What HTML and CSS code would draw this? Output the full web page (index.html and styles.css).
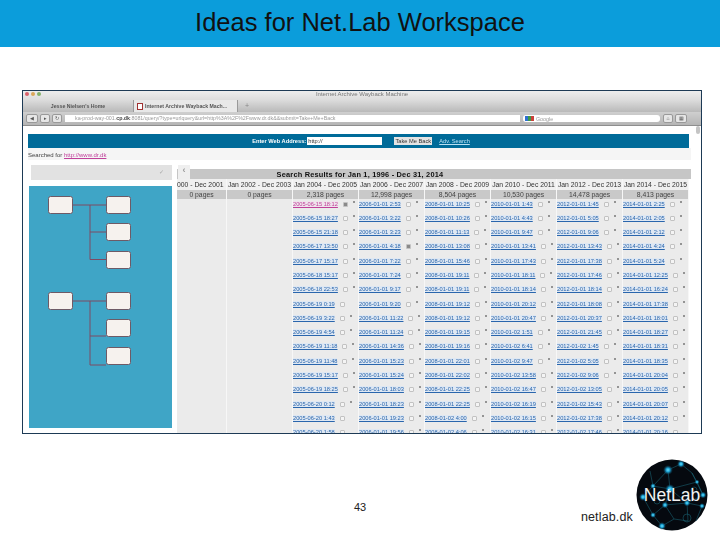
FILE: index.html
```html
<!DOCTYPE html>
<html lang="en">
<head>
  <meta charset="UTF-8">
  <title>Ideas for Net.Lab Workspace</title>
  <link rel="stylesheet" href="styles.css">
</head>
<body>
  <div class="slide">
    <header class="slide-title">Ideas for Net.Lab Workspace</header>

    <main class="slide-body">
      <div class="shot">
        <div class="titlebar">
          <div class="lights"><i class="light red"></i><i class="light amber"></i><i class="light green"></i></div>
          <div class="window-name">Internet Archive Wayback Machine</div>
        </div>
        <div class="tabs">
          <div class="tab">Jesse Nielsen's Home</div>
          <div class="tab active"><i class="favicon"></i>Internet Archive Wayback Mach...</div>
          <div class="tab-add">+</div>
        </div>
        <div class="toolbar">
          <div class="nav-btns"><span class="nav-btn wide">&#9664;</span><span class="nav-btn">&#9656;</span><span class="nav-btn">&#8635;</span></div>
          <div class="url-bar">ka-prod-way-001.<b>cp.dk</b>:8081/query/?type=urlquery&amp;url=http%3A%2F%2Fwww.dr.dk&amp;&amp;submit=Take+Me+Back</div>
          <div class="search-bar"><i class="g-icon"></i>Google</div>
          <div class="nav-btns"><span class="nav-btn">&#8962;</span><span class="nav-btn wide">&#9638;</span></div>
        </div>

        <div class="page">
          <div class="banner">
            <span class="banner-label">Enter Web Address:</span>
            <span class="banner-input">http://</span>
            <span class="banner-btn">Take Me Back</span>
            <span class="banner-link">Adv. Search</span>
          </div>
          <div class="searched">Searched for <a href="#">http://www.dr.dk</a></div>

          <div class="results">
            <aside class="side">
              <div class="side-top"><span class="side-pin">&#10003;</span></div>
              <div class="side-panel">
                <svg class="tree" width="143" height="242" viewBox="0 0 143 242">
                  <g class="tree-lines">
                    <path d="M44 19H77M61 19V73.500H77M61 46H77"/>
                    <path d="M44 115H77M61 115V179H77M61 150H77"/>
                  </g>
                  <g class="tree-nodes">
                    <rect x="19.500" y="10.500" width="24" height="17" rx="2"/>
                    <rect x="77.500" y="10.500" width="24" height="17" rx="2"/>
                    <rect x="77.500" y="37.500" width="24" height="17" rx="2"/>
                    <rect x="77.500" y="65.500" width="24" height="17" rx="2"/>
                    <rect x="19.500" y="106.500" width="24" height="17" rx="2"/>
                    <rect x="77.500" y="106.500" width="24" height="17" rx="2"/>
                    <rect x="77.500" y="133.500" width="24" height="17" rx="2"/>
                    <rect x="77.500" y="161.500" width="24" height="17" rx="2"/>
                  </g>
                </svg>
              </div>
            </aside>

            <section class="table">
              <div class="table-title"><span class="collapse">&#8249;</span>Search Results for Jan 1, 1996 - Dec 31, 2014</div>
              <div class="cols">
                <div class="col first">
                  <div class="col-head">000 - Dec 2001</div>
                  <div class="col-count">0 pages</div>
                </div>
                <div class="col">
                  <div class="col-head">Jan 2002 - Dec 2003</div>
                  <div class="col-count">0 pages</div>
                </div>
                <div class="col">
                  <div class="col-head">Jan 2004 - Dec 2005</div>
                  <div class="col-count">2,318 pages</div>
                  <div class="row"><a class="seen" href="#">2005-06-15 18:12</a><i class="box on"></i><i class="star"></i></div>
                  <div class="row"><a href="#">2005-06-15 18:27</a><i class="box"></i><i class="star"></i></div>
                  <div class="row"><a href="#">2005-06-15 21:18</a><i class="box"></i><i class="star"></i></div>
                  <div class="row"><a href="#">2005-06-17 13:50</a><i class="box"></i><i class="star"></i></div>
                  <div class="row"><a href="#">2005-06-17 15:17</a><i class="box"></i><i class="star"></i></div>
                  <div class="row"><a href="#">2005-06-18 15:17</a><i class="box"></i><i class="star"></i></div>
                  <div class="row"><a href="#">2005-06-18 22:53</a><i class="box"></i><i class="star"></i></div>
                  <div class="row"><a href="#">2005-06-19 0:19</a><i class="box"></i></div>
                  <div class="row"><a href="#">2005-06-19 3:22</a><i class="box"></i><i class="star"></i></div>
                  <div class="row"><a href="#">2005-06-19 4:54</a><i class="box"></i><i class="star"></i></div>
                  <div class="row"><a href="#">2005-06-19 11:18</a><i class="box"></i><i class="star"></i></div>
                  <div class="row"><a href="#">2005-06-19 11:48</a><i class="box"></i><i class="star"></i></div>
                  <div class="row"><a href="#">2005-06-19 15:17</a><i class="box"></i><i class="star"></i></div>
                  <div class="row"><a href="#">2005-06-19 18:25</a><i class="box"></i><i class="star"></i></div>
                  <div class="row"><a href="#">2005-06-20 0:12</a><i class="box"></i><i class="star"></i></div>
                  <div class="row"><a href="#">2005-06-20 1:43</a><i class="box"></i></div>
                  <div class="row"><a href="#">2005-06-20 1:58</a><i class="box"></i></div>
                </div>
                <div class="col">
                  <div class="col-head">Jan 2006 - Dec 2007</div>
                  <div class="col-count">12,998 pages</div>
                  <div class="row"><a href="#">2006-01-01 2:53</a><i class="box"></i><i class="star"></i></div>
                  <div class="row"><a href="#">2006-01-01 3:22</a><i class="box"></i><i class="star"></i></div>
                  <div class="row"><a href="#">2006-01-01 3:23</a><i class="box"></i><i class="star"></i></div>
                  <div class="row"><a href="#">2006-01-01 4:18</a><i class="box on"></i><i class="star"></i></div>
                  <div class="row"><a href="#">2006-01-01 7:22</a><i class="box"></i><i class="star"></i></div>
                  <div class="row"><a href="#">2006-01-01 7:24</a><i class="box"></i><i class="star"></i></div>
                  <div class="row"><a href="#">2006-01-01 9:17</a><i class="box"></i><i class="star"></i></div>
                  <div class="row"><a href="#">2006-01-01 9:20</a><i class="box"></i><i class="star"></i></div>
                  <div class="row"><a href="#">2006-01-01 11:22</a><i class="box"></i><i class="star"></i></div>
                  <div class="row"><a href="#">2006-01-01 11:24</a><i class="box"></i><i class="star"></i></div>
                  <div class="row"><a href="#">2006-01-01 14:36</a><i class="box"></i><i class="star"></i></div>
                  <div class="row"><a href="#">2006-01-01 15:23</a><i class="box"></i><i class="star"></i></div>
                  <div class="row"><a href="#">2006-01-01 15:24</a><i class="box"></i><i class="star"></i></div>
                  <div class="row"><a href="#">2006-01-01 18:03</a><i class="box"></i><i class="star"></i></div>
                  <div class="row"><a href="#">2006-01-01 18:23</a><i class="box"></i><i class="star"></i></div>
                  <div class="row"><a href="#">2006-01-01 19:23</a><i class="box"></i><i class="star"></i></div>
                  <div class="row"><a href="#">2006-01-01 19:56</a><i class="box"></i><i class="star"></i></div>
                </div>
                <div class="col">
                  <div class="col-head">Jan 2008 - Dec 2009</div>
                  <div class="col-count">8,504 pages</div>
                  <div class="row"><a href="#">2008-01-01 10:25</a><i class="box"></i><i class="star"></i></div>
                  <div class="row"><a href="#">2008-01-01 10:26</a><i class="box"></i><i class="star"></i></div>
                  <div class="row"><a href="#">2008-01-01 11:13</a><i class="box"></i><i class="star"></i></div>
                  <div class="row"><a href="#">2008-01-01 13:08</a><i class="box"></i><i class="star"></i></div>
                  <div class="row"><a href="#">2008-01-01 15:46</a><i class="box"></i><i class="star"></i></div>
                  <div class="row"><a href="#">2008-01-01 19:11</a><i class="box"></i><i class="star"></i></div>
                  <div class="row"><a href="#">2008-01-01 19:11</a><i class="box"></i><i class="star"></i></div>
                  <div class="row"><a href="#">2008-01-01 19:12</a><i class="box"></i><i class="star"></i></div>
                  <div class="row"><a href="#">2008-01-01 19:12</a><i class="box"></i><i class="star"></i></div>
                  <div class="row"><a href="#">2008-01-01 19:15</a><i class="box"></i><i class="star"></i></div>
                  <div class="row"><a href="#">2008-01-01 19:16</a><i class="box"></i><i class="star"></i></div>
                  <div class="row"><a href="#">2008-01-01 22:01</a><i class="box"></i><i class="star"></i></div>
                  <div class="row"><a href="#">2008-01-01 22:02</a><i class="box"></i><i class="star"></i></div>
                  <div class="row"><a href="#">2008-01-01 22:25</a><i class="box"></i><i class="star"></i></div>
                  <div class="row"><a href="#">2008-01-01 22:25</a><i class="box"></i><i class="star"></i></div>
                  <div class="row"><a href="#">2008-01-02 4:00</a><i class="box"></i><i class="star"></i></div>
                  <div class="row"><a href="#">2008-01-02 4:06</a><i class="box"></i><i class="star"></i></div>
                </div>
                <div class="col">
                  <div class="col-head">Jan 2010 - Dec 2011</div>
                  <div class="col-count">10,530 pages</div>
                  <div class="row"><a href="#">2010-01-01 1:43</a><i class="box"></i><i class="star"></i></div>
                  <div class="row"><a href="#">2010-01-01 4:43</a><i class="box"></i><i class="star"></i></div>
                  <div class="row"><a href="#">2010-01-01 9:47</a><i class="box"></i><i class="star"></i></div>
                  <div class="row"><a href="#">2010-01-01 13:41</a><i class="box"></i><i class="star"></i></div>
                  <div class="row"><a href="#">2010-01-01 17:43</a><i class="box"></i><i class="star"></i></div>
                  <div class="row"><a href="#">2010-01-01 18:11</a><i class="box"></i><i class="star"></i></div>
                  <div class="row"><a href="#">2010-01-01 18:14</a><i class="box"></i><i class="star"></i></div>
                  <div class="row"><a href="#">2010-01-01 20:12</a><i class="box"></i><i class="star"></i></div>
                  <div class="row"><a href="#">2010-01-01 20:47</a><i class="box"></i><i class="star"></i></div>
                  <div class="row"><a href="#">2010-01-02 1:51</a><i class="box"></i><i class="star"></i></div>
                  <div class="row"><a href="#">2010-01-02 6:41</a><i class="box"></i><i class="star"></i></div>
                  <div class="row"><a href="#">2010-01-02 9:47</a><i class="box"></i><i class="star"></i></div>
                  <div class="row"><a href="#">2010-01-02 13:58</a><i class="box"></i><i class="star"></i></div>
                  <div class="row"><a href="#">2010-01-02 16:47</a><i class="box"></i><i class="star"></i></div>
                  <div class="row"><a href="#">2010-01-02 16:19</a><i class="box"></i><i class="star"></i></div>
                  <div class="row"><a href="#">2010-01-02 16:15</a><i class="box"></i><i class="star"></i></div>
                  <div class="row"><a href="#">2010-01-02 16:31</a><i class="box"></i><i class="star"></i></div>
                </div>
                <div class="col">
                  <div class="col-head">Jan 2012 - Dec 2013</div>
                  <div class="col-count">14,478 pages</div>
                  <div class="row"><a href="#">2012-01-01 1:45</a><i class="box"></i><i class="star"></i></div>
                  <div class="row"><a href="#">2012-01-01 5:05</a><i class="box"></i><i class="star"></i></div>
                  <div class="row"><a href="#">2012-01-01 9:06</a><i class="box"></i><i class="star"></i></div>
                  <div class="row"><a href="#">2012-01-01 13:43</a><i class="box"></i><i class="star"></i></div>
                  <div class="row"><a href="#">2012-01-01 17:38</a><i class="box"></i><i class="star"></i></div>
                  <div class="row"><a href="#">2012-01-01 17:46</a><i class="box"></i><i class="star"></i></div>
                  <div class="row"><a href="#">2012-01-01 18:14</a><i class="box"></i><i class="star"></i></div>
                  <div class="row"><a href="#">2012-01-01 18:08</a><i class="box"></i><i class="star"></i></div>
                  <div class="row"><a href="#">2012-01-01 20:37</a><i class="box"></i><i class="star"></i></div>
                  <div class="row"><a href="#">2012-01-01 21:45</a><i class="box"></i><i class="star"></i></div>
                  <div class="row"><a href="#">2012-01-02 1:45</a><i class="box"></i><i class="star"></i></div>
                  <div class="row"><a href="#">2012-01-02 5:05</a><i class="box"></i><i class="star"></i></div>
                  <div class="row"><a href="#">2012-01-02 9:06</a><i class="box"></i><i class="star"></i></div>
                  <div class="row"><a href="#">2012-01-02 13:05</a><i class="box"></i><i class="star"></i></div>
                  <div class="row"><a href="#">2012-01-02 15:43</a><i class="box"></i><i class="star"></i></div>
                  <div class="row"><a href="#">2012-01-02 17:38</a><i class="box"></i><i class="star"></i></div>
                  <div class="row"><a href="#">2012-01-02 17:46</a><i class="box"></i><i class="star"></i></div>
                </div>
                <div class="col">
                  <div class="col-head">Jan 2014 - Dec 2015</div>
                  <div class="col-count">8,413 pages</div>
                  <div class="row"><a href="#">2014-01-01 2:25</a><i class="box"></i><i class="star"></i></div>
                  <div class="row"><a href="#">2014-01-01 2:05</a><i class="box"></i><i class="star"></i></div>
                  <div class="row"><a href="#">2014-01-01 2:12</a><i class="box"></i><i class="star"></i></div>
                  <div class="row"><a href="#">2014-01-01 4:24</a><i class="box"></i><i class="star"></i></div>
                  <div class="row"><a href="#">2014-01-01 5:24</a><i class="box"></i><i class="star"></i></div>
                  <div class="row"><a href="#">2014-01-01 12:25</a><i class="box"></i><i class="star"></i></div>
                  <div class="row"><a href="#">2014-01-01 16:24</a><i class="box"></i><i class="star"></i></div>
                  <div class="row"><a href="#">2014-01-01 17:38</a><i class="box"></i><i class="star"></i></div>
                  <div class="row"><a href="#">2014-01-01 18:01</a><i class="box"></i><i class="star"></i></div>
                  <div class="row"><a href="#">2014-01-01 18:27</a><i class="box"></i><i class="star"></i></div>
                  <div class="row"><a href="#">2014-01-01 18:31</a><i class="box"></i><i class="star"></i></div>
                  <div class="row"><a href="#">2014-01-01 18:35</a><i class="box"></i><i class="star"></i></div>
                  <div class="row"><a href="#">2014-01-01 20:04</a><i class="box"></i><i class="star"></i></div>
                  <div class="row"><a href="#">2014-01-01 20:05</a><i class="box"></i><i class="star"></i></div>
                  <div class="row"><a href="#">2014-01-01 20:07</a><i class="box"></i><i class="star"></i></div>
                  <div class="row"><a href="#">2014-01-01 20:12</a><i class="box"></i><i class="star"></i></div>
                  <div class="row"><a href="#">2014-01-01 20:16</a><i class="box"></i></div>
                </div>
              </div>
            </section>
            <div class="scrollbar"><i class="scroll-thumb"></i></div>
          </div>
        </div>
      </div>
    </main>

    <footer class="slide-foot">
      <div class="page-no">43</div>
      <div class="foot-right">
        <span class="site">netlab.dk</span>
        <div class="logo">
          <svg width="72" height="72" viewBox="0 0 72 72">
            <defs>
              <radialGradient id="glow">
                <stop offset="0" stop-color="#6fe2fa"/>
                <stop offset="0.4" stop-color="#1a9fd0"/>
                <stop offset="1" stop-color="#0a3c55" stop-opacity="0"/>
              </radialGradient>
            </defs>
            <circle cx="36" cy="36" r="35.500" fill="#05090f"/>
            <g class="logo-lines">
              <path d="M32 11L45 5L56 14L67 36L51 44L66 47L60 62M32 11L17 27L7 38L17 56L29 46L34 30L51 44M17 27L34 30M34 30L32 11M34 30L61 23L67 36M29 46L51 44M17 56L26 67L38 60L29 46M38 60L52 62L51 44M14 12L17 27M61 23L56 14"/>
            </g>
            <circle class="logo-ring" cx="51" cy="59" r="4"/>
            <circle class="logo-ring" cx="21" cy="42" r="3"/>
            <circle class="logo-ring" cx="58" cy="31" r="3"/>
            <g fill="url(#glow)">
              <circle cx="32" cy="11" r="5"/>
              <circle cx="45" cy="5" r="4"/>
              <circle cx="34" cy="30" r="5"/>
              <circle cx="17" cy="27" r="3"/>
              <circle cx="7" cy="38" r="4"/>
              <circle cx="67" cy="36" r="3.500"/>
              <circle cx="29" cy="46" r="3.500"/>
              <circle cx="51" cy="44" r="3.500"/>
              <circle cx="66" cy="47" r="3"/>
              <circle cx="17" cy="56" r="3"/>
              <circle cx="26" cy="67" r="4"/>
              <circle cx="61" cy="23" r="2.500"/>
            </g>
          </svg>
          <span class="logo-text">NetLab</span>
        </div>
      </div>
    </footer>
  </div>
</body>
</html>
```

FILE: styles.css
```css
body {
  margin: 0;
  background: #ffffff;
  font-family: "Liberation Sans", Arial, sans-serif;
}

a {
  color: inherit;
}

.slide {
  width: 720px;
  height: 540px;
  display: flex;
  flex-direction: column;
  overflow: hidden;
}

.slide-title {
  height: 47px;
  flex: none;
  background: #0b9ddb;
  color: #111111;
  font-size: 25.500px;
  line-height: 45px;
  text-align: center;
}

.slide-body {
  flex: none;
  height: 387px;
  padding: 43px 18px 0 22px;
  box-sizing: border-box;
}

/* browser screenshot */
.shot {
  width: 680px;
  height: 344px;
  box-sizing: border-box;
  border: 1px solid #1d3a55;
  border-bottom-width: 1.5px;
  display: flex;
  flex-direction: column;
  overflow: hidden;
  background: #ffffff;
  color: #333333;
  filter: blur(0.45px);
}

.titlebar {
  height: 9px;
  flex: none;
  position: relative;
  background: linear-gradient(#ededed, #dcdcdc);
}

.lights {
  display: flex;
  gap: 2px;
  padding: 1px 0 0 2px;
}

.light {
  width: 4px;
  height: 4px;
  border-radius: 50%;
}

.light.red { background: #d9606a; }
.light.amber { background: #dba75a; }
.light.green { background: #84b26a; }

.window-name {
  position: absolute;
  left: 0;
  right: 0;
  top: 0;
  text-align: center;
  font-size: 6px;
  line-height: 7px;
  color: #777777;
}

.tabs {
  height: 12px;
  flex: none;
  display: flex;
  align-items: stretch;
  gap: 3px;
  padding-left: 3px;
  background: linear-gradient(#dcdcdc, #b9b9b9);
  font-size: 5.200px;
  color: #555555;
}

.tab {
  width: 104px;
  display: flex;
  align-items: center;
  justify-content: center;
  gap: 2px;
  font-weight: bold;
}

.tab.active {
  width: 100px;
  justify-content: flex-start;
  padding-left: 3px;
  background: #e8e8e8;
  border-left: 1px solid #999999;
  border-right: 1px solid #999999;
}

.favicon {
  width: 4px;
  height: 5px;
  border: 1px solid #a03030;
  background: #ffffff;
}

.tab-add {
  width: 12px;
  text-align: center;
  line-height: 12px;
  font-size: 7px;
  color: #888888;
}

.toolbar {
  height: 14px;
  flex: none;
  display: flex;
  align-items: center;
  gap: 3px;
  padding: 0 3px;
  background: linear-gradient(#cfcfcf, #b5b5b5);
  border-bottom: 1px solid #8e8e8e;
  box-sizing: border-box;
}

.nav-btns {
  display: flex;
  gap: 2px;
  flex: none;
}

.nav-btn {
  width: 10px;
  height: 9px;
  border-radius: 2px;
  background: #e6e6e6;
  border: 1px solid #999999;
  box-sizing: border-box;
  font-size: 5px;
  line-height: 7px;
  text-align: center;
  color: #555555;
}

.nav-btn.wide {
  width: 12px;
}

.url-bar {
  flex: none;
  width: 455px;
  height: 7px;
  padding-left: 10px;
  box-sizing: border-box;
  background: #ffffff;
  font-size: 5.300px;
  line-height: 7px;
  color: #999999;
  white-space: nowrap;
  overflow: hidden;
}

.url-bar b {
  color: #444444;
}

.search-bar {
  flex: none;
  width: 137px;
  height: 7px;
  display: flex;
  align-items: center;
  gap: 2px;
  padding-left: 2px;
  box-sizing: border-box;
  border-radius: 3px;
  background: #ffffff;
  font-size: 5.300px;
  color: #999999;
}

.g-icon {
  width: 9px;
  height: 5px;
  background: linear-gradient(90deg, #2f6fd0 33%, #3d9a4a 33% 66%, #c9403a 66%);
}

.page {
  flex: 1;
  min-height: 0;
  padding: 8px 0 0 5px;
  display: flex;
  flex-direction: column;
}

.banner {
  width: 661px;
  height: 14px;
  flex: none;
  display: flex;
  align-items: center;
  justify-content: center;
  background: #006b99;
  color: #ffffff;
  font-size: 5.700px;
}

.banner-label {
  font-weight: bold;
  margin-left: 5px;
  margin-right: 1px;
}

.banner-input {
  width: 75px;
  height: 8px;
  background: #ffffff;
  color: #333333;
  line-height: 8px;
  padding-left: 1px;
  box-sizing: border-box;
  margin-right: 12px;
}

.banner-btn {
  width: 38px;
  height: 8px;
  background: #e4e4e4;
  color: #333333;
  text-align: center;
  line-height: 8px;
  margin-right: 7px;
}

.banner-link {
  color: #b9e0f2;
  text-decoration: underline;
}

.searched {
  width: 663px;
  height: 12px;
  flex: none;
  margin-bottom: 5px;
  background: #f5f5f5;
  font-size: 6px;
  line-height: 15px;
  color: #444444;
}

.searched a {
  color: #c0409a;
}

.results {
  flex: 1;
  min-height: 0;
  display: flex;
}

.side {
  width: 144px;
  flex: none;
  margin-right: 5px;
  display: flex;
  flex-direction: column;
  gap: 6px;
}

.side-top {
  height: 15px;
  flex: none;
  margin-left: 3px;
  background: #e2e2e2;
  text-align: right;
  padding-right: 8px;
  font-size: 6px;
  line-height: 15px;
  color: #aaaaaa;
}

.side-panel {
  height: 242px;
  flex: none;
  margin-left: 1px;
  background: #3fa5c6;
}

.tree {
  display: block;
}

.tree-lines path {
  fill: none;
  stroke: #7f4a63;
  stroke-width: 1;
}

.tree-nodes rect {
  fill: #f6f2ee;
  stroke: #6e5a66;
  stroke-width: 1;
}

.table {
  width: 514px;
  flex: none;
  padding-top: 4px;
  box-sizing: border-box;
  display: flex;
  flex-direction: column;
  overflow: hidden;
}

.table-title {
  height: 10px;
  flex: none;
  position: relative;
  padding-right: 148px;
  background: #c6c6c6;
  color: #111111;
  font-size: 7.400px;
  font-weight: bold;
  line-height: 11px;
  text-align: center;
  letter-spacing: 0.2px;
}

.collapse {
  position: absolute;
  left: 1px;
  top: -4px;
  width: 12px;
  height: 14px;
  background: #efefef;
  color: #999999;
  font-size: 9px;
  line-height: 11px;
}

.cols {
  flex: 1;
  min-height: 0;
  display: grid;
  grid-template-columns: 50px repeat(7, 66px);
}

.col {
  background: #ebebeb;
  border-right: 1px solid #f7f7f7;
  box-sizing: border-box;
  overflow: hidden;
}

.col-head {
  height: 11px;
  font-size: 6.800px;
  line-height: 11px;
  text-align: center;
  white-space: nowrap;
  color: #333333;
  background: #f0f0f0;
}

.first .col-head {
  text-align: left;
}

.col-count {
  height: 9px;
  font-size: 6.800px;
  line-height: 9px;
  text-align: center;
  color: #444444;
  background: #c9c9c9;
}

.row {
  height: 14.300px;
  padding-top: 1.500px;
  box-sizing: border-box;
  display: flex;
  align-items: flex-start;
  gap: 3px;
  font-size: 5.700px;
  line-height: 6.500px;
  white-space: nowrap;
}

.row a {
  color: #2a66ad;
  background: #dfe8f3;
}

.row a.seen {
  color: #c0409a;
  background: #efe3ec;
}

.box {
  width: 3px;
  height: 3px;
  flex: none;
  margin: 1px 0 0 2px;
  border: 1px solid #c2c2c2;
  border-radius: 1px;
  background: #f4f4f4;
}

.box.on {
  background: #8a8a8a;
}

.star {
  width: 2px;
  height: 2px;
  flex: none;
  margin-left: 2px;
  border-radius: 50%;
  background: #777777;
}

.scrollbar {
  flex: 1;
  margin-top: -39px;
  padding-right: 1px;
  background: #ffffff;
}

.scroll-thumb {
  display: block;
  width: 4px;
  height: 8px;
  margin-left: auto;
  border-radius: 2px;
  background: #c4c4c4;
}

/* footer */
.slide-foot {
  flex: 1;
  display: grid;
  grid-template-columns: 1fr auto 1fr;
}

.page-no {
  grid-column: 2;
  padding-top: 67px;
  font-size: 11px;
  line-height: 13px;
  color: #222222;
}

.foot-right {
  grid-column: 3;
  display: flex;
  justify-content: flex-end;
  padding-right: 12px;
  gap: 3px;
}

.site {
  padding-top: 76px;
  font-size: 12.500px;
  line-height: 15px;
  letter-spacing: 0.15px;
  color: #222222;
}

.logo {
  position: relative;
  width: 72px;
  height: 72px;
  margin-top: 25px;
}

.logo svg {
  display: block;
}

.logo-lines path {
  fill: none;
  stroke: #1c6f80;
  stroke-width: 0.500;
}

.logo-ring {
  fill: none;
  stroke: #1c6f80;
  stroke-width: 0.500;
}

.logo-text {
  position: absolute;
  left: 0;
  right: 0;
  top: 25px;
  text-align: center;
  font-size: 17.500px;
  line-height: 22px;
  color: #f2f2f2;
}
```
